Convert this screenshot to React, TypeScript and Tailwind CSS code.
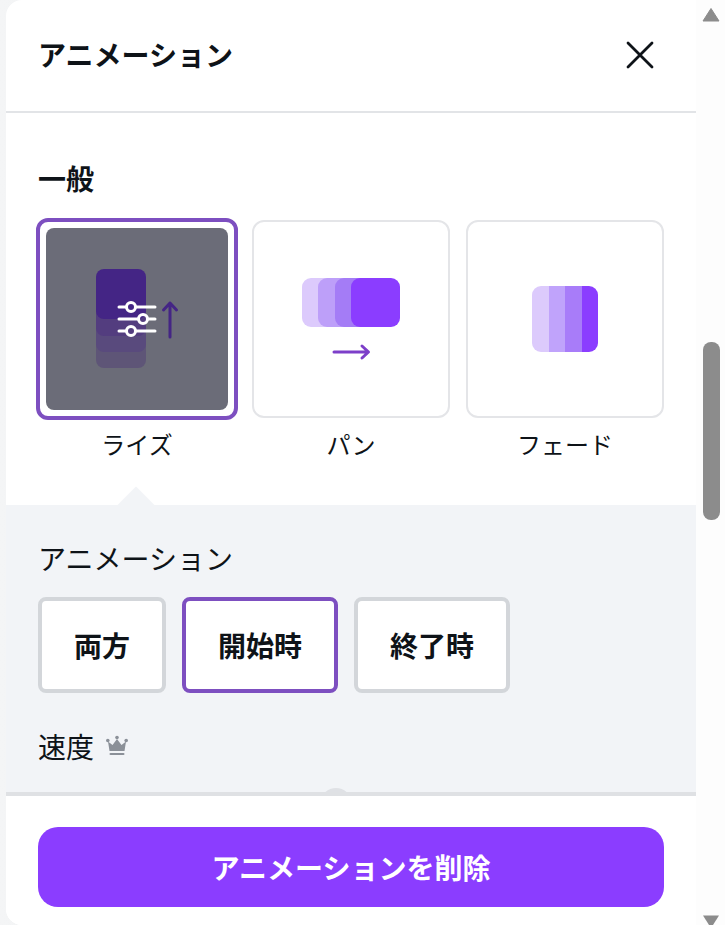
export default function App() {
  return (
    <div className="flex h-[925px] w-[725px] overflow-hidden bg-[#fdfdfd] text-[#0e1318] font-['Noto_Sans_CJK_JP','Noto_Sans',sans-serif]">

      {/* Panel */}
      <div className="w-[696px] h-full pl-[6px] bg-gradient-to-r from-[#f4f5f6] to-[#dfe1e4] shrink-0">
        <div className="h-full flex flex-col bg-white rounded-l-[16px] overflow-hidden">

          {/* Header */}
          <div className="h-[113px] shrink-0 flex items-center justify-between pl-[32px] pr-[42px] border-b-2 border-[#e2e4e7]">
            <h1 className="text-[28px] leading-[40px] font-bold mb-[3px]">アニメーション</h1>
            <svg width="28" height="28" viewBox="0 0 28 28" className="mb-[1px]">
              <path d="M2 2 L26 26 M26 2 L2 26" stroke="#0e1318" strokeWidth="2.800" strokeLinecap="round" />
            </svg>
          </div>

          {/* Scroll area */}
          <div className="flex-1 overflow-hidden">
            <div className="px-[32px] pt-[45px]">
              <h2 className="text-[28px] leading-[40px] font-bold">一般</h2>
              <div className="mt-[22px] grid grid-cols-[198px_198px_198px] gap-x-[16px]">

                {/* Rise */}
                <div className="flex flex-col items-center">
                  <div className="-m-[2px] w-[202px] h-[202px] p-[6px] rounded-[12px] border-[4px] border-[#7d4fc0] bg-white">
                    <div className="w-full h-full rounded-[8px] bg-[#6b6c78] overflow-hidden">
                      <svg width="182" height="182" viewBox="46 228 182 182" className="block">
                        <rect x="96" y="318" width="50" height="50" rx="8" fill="#5e5577" />
                        <rect x="96" y="302" width="50" height="50" rx="8" fill="#594a7d" />
                        <rect x="96" y="286" width="50" height="50" rx="8" fill="#533d7f" />
                        <rect x="96" y="269" width="50" height="50" rx="8" fill="#442585" />
                        <path d="M170 337 V303 M163.500 310 L170 303 L176.500 310" fill="none" stroke="#442585" strokeWidth="3" strokeLinecap="round" strokeLinejoin="round" />
                        <g stroke="#ffffff" strokeWidth="3" strokeLinecap="round">
                          <path d="M119 307 H126 M136 307 H155" />
                          <path d="M119 319 H138 M148 319 H155" />
                          <path d="M119 331 H126 M136 331 H155" />
                          <g fill="none">
                            <circle cx="131" cy="307" r="4.500" />
                            <circle cx="143" cy="319" r="4.500" />
                            <circle cx="131" cy="331" r="4.500" />
                          </g>
                        </g>
                      </svg>
                    </div>
                  </div>
                  <span className="mt-[10px] text-[24px] leading-[32px]">ライズ</span>
                </div>

                {/* Pan */}
                <div className="flex flex-col items-center">
                  <div className="w-[198px] h-[198px] rounded-[12px] border-2 border-[#e4e5e8] bg-white overflow-hidden">
                    <svg width="194" height="194" viewBox="254 222 194 194" className="block">
                      <rect x="302" y="278" width="50" height="49" rx="9" fill="#dccafc" />
                      <rect x="318" y="278" width="50" height="49" rx="9" fill="#bd9ff9" />
                      <rect x="335" y="278" width="50" height="49" rx="9" fill="#a47cf6" />
                      <rect x="351" y="278" width="49" height="49" rx="9" fill="#8b3dff" />
                      <path d="M334 352 H368 M362 346 L368.500 352 L362 358" fill="none" stroke="#7d3fc9" strokeWidth="3" strokeLinecap="round" strokeLinejoin="round" />
                    </svg>
                  </div>
                  <span className="mt-[10px] text-[24px] leading-[32px]">パン</span>
                </div>

                {/* Fade */}
                <div className="flex flex-col items-center">
                  <div className="w-[198px] h-[198px] rounded-[12px] border-2 border-[#e4e5e8] bg-white overflow-hidden">
                    <svg width="194" height="194" viewBox="468 222 194 194" className="block">
                      <clipPath id="fade-clip">
                        <rect x="532" y="286" width="66" height="66" rx="9" />
                      </clipPath>
                      <g clipPath="url(#fade-clip)">
                        <rect x="532" y="286" width="17" height="66" fill="#dccafc" />
                        <rect x="549" y="286" width="16" height="66" fill="#c0a3fb" />
                        <rect x="565" y="286" width="17" height="66" fill="#a87cf9" />
                        <rect x="582" y="286" width="16" height="66" fill="#8b3dff" />
                      </g>
                    </svg>
                  </div>
                  <span className="mt-[10px] text-[24px] leading-[32px]">フェード</span>
                </div>

              </div>
            </div>

            {/* Settings */}
            <div className="relative mt-[45px] bg-[#f2f4f7] px-[32px] pt-[33px] pb-[40px]">
              <div className="absolute left-[117px] -top-[13px] w-[26px] h-[26px] rotate-45 bg-[#f2f4f7]"></div>
              <p className="text-[28px] leading-[40px]">アニメーション</p>
              <div className="mt-[19px] flex gap-[16px]">
                <button className="w-[128px] h-[96px] rounded-[8px] border-[4px] border-[#d3d6da] bg-white text-[28px] font-bold">両方</button>
                <button className="w-[156px] h-[96px] rounded-[8px] border-[4px] border-[#7d4fc0] bg-white text-[28px] font-bold">開始時</button>
                <button className="w-[156px] h-[96px] rounded-[8px] border-[4px] border-[#d3d6da] bg-white text-[28px] font-bold">終了時</button>
              </div>
              <div className="mt-[33px] flex items-center gap-[11px]">
                <span className="text-[28px] leading-[40px]">速度</span>
                <svg width="24" height="22" viewBox="105 737 24 22">
                  <path d="M108 743.500 L112.500 747 L117 741 L121.500 747 L126 743.500 L124.500 753 H109.500 Z" fill="#8b9098" />
                  <circle cx="107.800" cy="742.500" r="1.800" fill="#8b9098" />
                  <circle cx="117" cy="739.500" r="1.800" fill="#8b9098" />
                  <circle cx="126.200" cy="742.500" r="1.800" fill="#8b9098" />
                  <rect x="109.500" y="755" width="15" height="2" rx="1" fill="#8b9098" />
                </svg>
              </div>
              <div className="mt-[22px] ml-[282px] w-[32px] h-[32px] rounded-full bg-[#dfe1e5]"></div>
            </div>
          </div>

          {/* Footer */}
          <div className="h-[133px] shrink-0 px-[32px] pt-[31px] border-t-[4px] border-[#dfe1e4] bg-white">
            <button className="w-full h-[80px] rounded-[20px] bg-[#8b3dff] text-white text-[28px] font-bold">アニメーションを削除</button>
          </div>

        </div>
      </div>

      {/* Scrollbar */}
      <div className="flex-1 relative flex flex-col items-center justify-between">
        <svg width="18" height="16" viewBox="0 0 18 16" className="mt-[7px]">
          <path d="M9 1.500 L17 14 H1 Z" fill="#8c8c8c" stroke="#8c8c8c" strokeLinejoin="round" />
        </svg>
        <div className="absolute top-[342px] left-[7px] w-[17px] h-[178px] rounded-[8px] bg-[#8c8c8c]"></div>
        <svg width="18" height="10" viewBox="0 0 18 10">
          <path d="M1 0.500 H17 L11 10 H7 Z" fill="#8c8c8c" />
        </svg>
      </div>

    </div>
  );
}
